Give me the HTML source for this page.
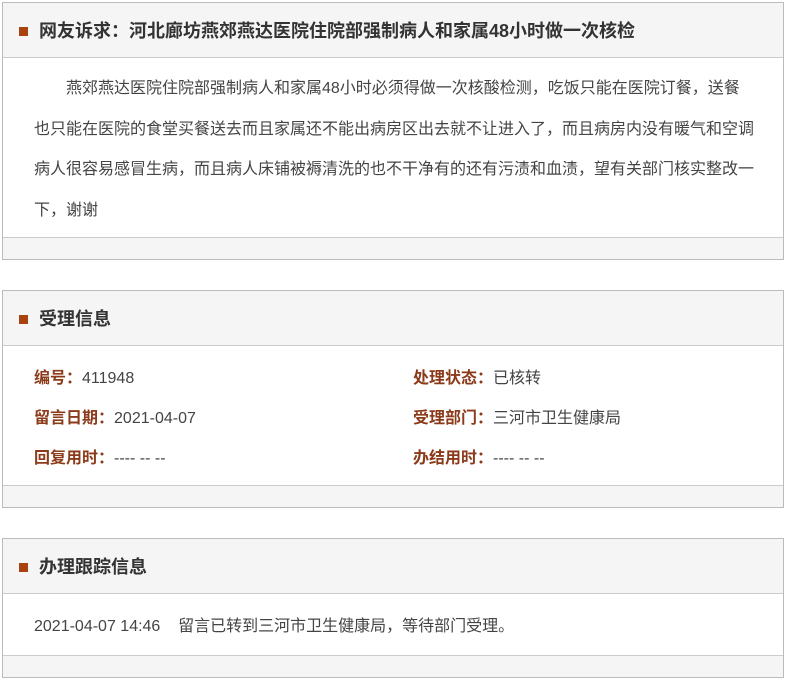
<!DOCTYPE html>
<html><head><meta charset="utf-8"><style>
body{margin:0;background:#fff;font-family:"Liberation Sans","Noto Sans CJK SC",sans-serif;color:#333;}
.box{position:absolute;left:2px;width:780px;border:1px solid #bbb;background:#fff;}
.hd{background:#f5f5f5;border-bottom:1px solid #ccc;height:54px;position:relative;}
.hd .sq{position:absolute;left:16px;top:24px;width:9px;height:9px;background:#a8430f;}
.hd .t{position:absolute;left:36px;top:0;line-height:56px;font-size:18px;font-weight:bold;color:#333;}
.ft{position:absolute;left:0;right:0;bottom:0;height:21px;background:#f5f5f5;border-top:1px solid #ccc;}
.txt{position:absolute;left:31px;right:28px;top:68px;font-size:16px;line-height:40.5px;text-indent:2em;color:#444;}
.row{position:absolute;font-size:16px;color:#444;}
.row b{color:#8b3a1a;}
</style></head><body>
<div class="box" style="top:2px;height:256px;">
 <div class="hd"><div class="sq"></div><div class="t">网友诉求：河北廊坊燕郊燕达医院住院部强制病人和家属48小时做一次核检</div></div>
 <div class="txt" style="top:66px;">燕郊燕达医院住院部强制病人和家属48小时必须得做一次核酸检测，吃饭只能在医院订餐，送餐也只能在医院的食堂买餐送去而且家属还不能出病房区出去就不让进入了，而且病房内没有暖气和空调病人很容易感冒生病，而且病人床铺被褥清洗的也不干净有的还有污渍和血渍，望有关部门核实整改一下，谢谢</div>
 <div class="ft"></div>
</div>
<div class="box" style="top:290px;height:216px;">
 <div class="hd"><div class="sq"></div><div class="t">受理信息</div></div>
 <div class="row" style="left:31px;top:73px;"><b>编号：</b>411948</div>
 <div class="row" style="left:410px;top:73px;"><b>处理状态：</b>已核转</div>
 <div class="row" style="left:31px;top:113px;"><b>留言日期：</b>2021-04-07</div>
 <div class="row" style="left:410px;top:113px;"><b>受理部门：</b>三河市卫生健康局</div>
 <div class="row" style="left:31px;top:153px;"><b>回复用时：</b>---- -- --</div>
 <div class="row" style="left:410px;top:153px;"><b>办结用时：</b>---- -- --</div>
 <div class="ft"></div>
</div>
<div class="box" style="top:538px;height:138px;">
 <div class="hd"><div class="sq"></div><div class="t">办理跟踪信息</div></div>
 <div class="row" style="left:31px;top:73px;">2021-04-07 14:46&nbsp;&nbsp;&nbsp;&nbsp;留言已转到三河市卫生健康局，等待部门受理。</div>
 <div class="ft"></div>
</div>
</body></html>
